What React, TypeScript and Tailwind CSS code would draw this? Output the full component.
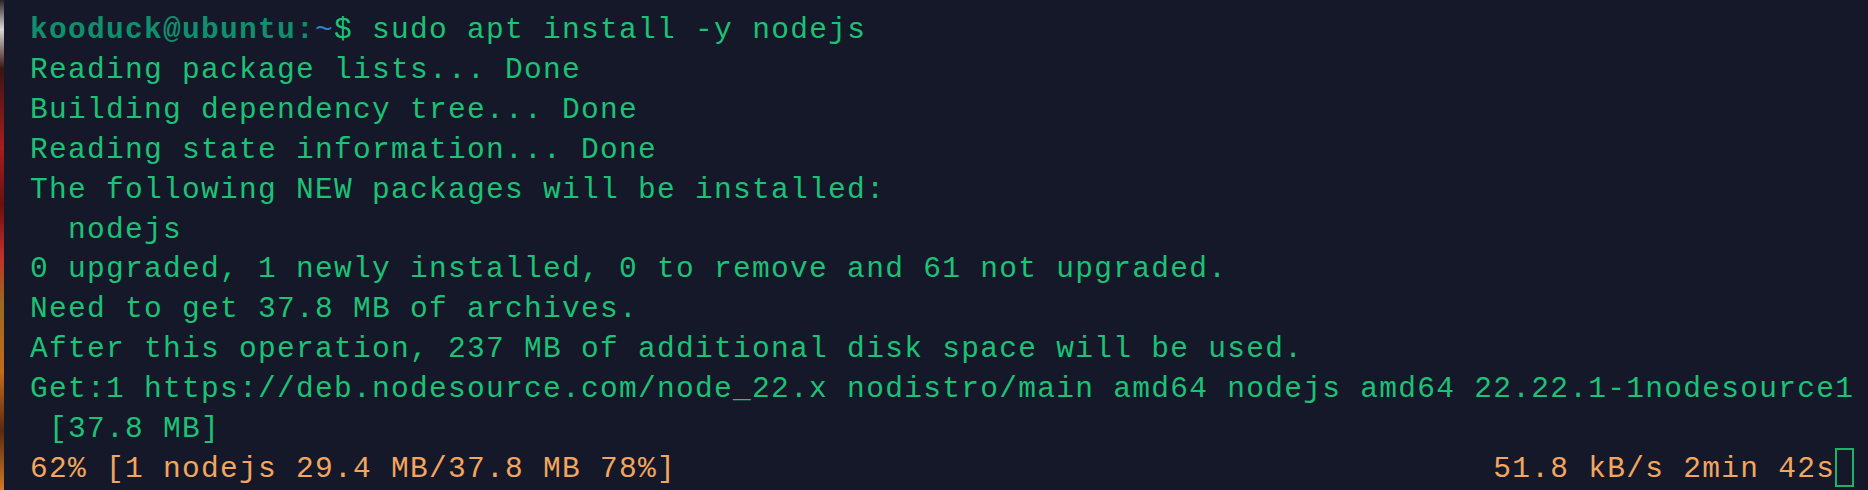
const green = "text-[#1cc275]";
const orange = "text-[#f2a65e]";

const outputLines = [
  "Reading package lists... Done",
  "Building dependency tree... Done",
  "Reading state information... Done",
  "The following NEW packages will be installed:",
  "  nodejs",
  "0 upgraded, 1 newly installed, 0 to remove and 61 not upgraded.",
  "Need to get 37.8 MB of archives.",
  "After this operation, 237 MB of additional disk space will be used.",
  "Get:1 https://deb.nodesource.com/node_22.x nodistro/main amd64 nodejs amd64 22.22.1-1nodesource1",
  " [37.8 MB]",
];

const progress = "62% [1 nodejs 29.4 MB/37.8 MB 78%]".padEnd(77, " ");

export default function App() {
  return (
    <div className="flex h-[490px] w-[1868px] overflow-hidden bg-[#151829]">
      <div className="w-[4px] shrink-0 bg-[linear-gradient(180deg,#2a2426_0%,#d8d8d8_6%,#3a1414_14%,#a81e1e_30%,#6a1010_42%,#c0302a_52%,#9a6a20_62%,#c46a1c_76%,#5a2a10_88%,#d07a2a_100%)]" />
      <div
        className={`flex-1 whitespace-pre pl-[26px] pt-[11px] font-['Liberation_Mono',monospace] text-[29.5px] leading-[39.9px] tracking-[1.3px] ${green}`}
      >
        <div>
          <span className="font-bold text-[#0f8f6d]">kooduck@ubuntu:</span>
          <span className="text-[#2f7fc4]">~</span>
          <span>$ sudo apt install -y nodejs</span>
        </div>
        {outputLines.map((line, i) => (
          <div key={i}>{line}</div>
        ))}
        <div className={orange}>
          {progress}
          {"51.8 kB/s 2min 42s"}
          <span className="inline-block h-[39px] w-[19px] -translate-y-[2px] border-2 border-[#1cb26c] align-top" />
        </div>
      </div>
    </div>
  );
}
